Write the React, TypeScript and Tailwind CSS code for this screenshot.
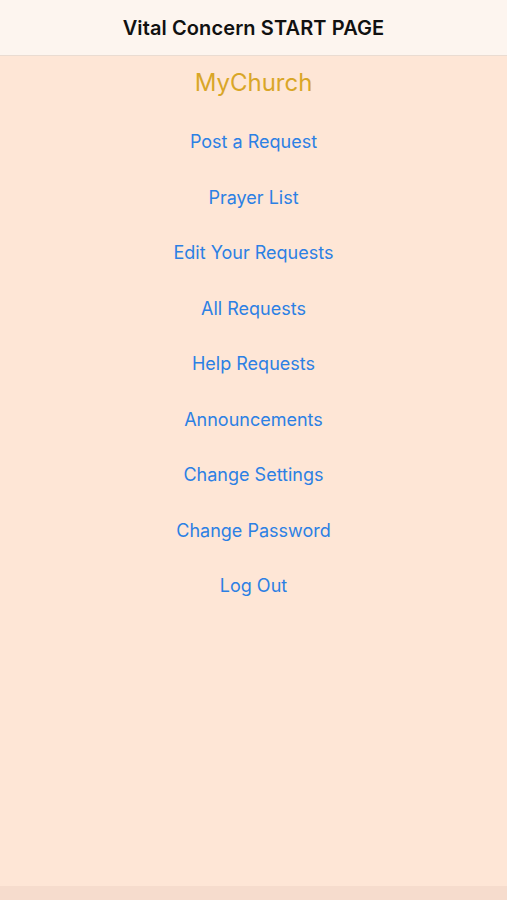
import React from "react";

const items = [
  "Post a Request",
  "Prayer List",
  "Edit Your Requests",
  "All Requests",
  "Help Requests",
  "Announcements",
  "Change Settings",
  "Change Password",
  "Log Out",
];

export default function App() {
  return (
    <div
      className="flex h-[900px] w-full flex-col bg-[#fee6d6]"
      style={{ fontFamily: "Inter, Roboto, 'Noto Sans', sans-serif" }}
    >
      {/* Nav bar */}
      <div className="flex h-[56px] shrink-0 items-center justify-center border-b border-[#eadcd2] bg-[#fdf5ef]">
        <h1 className="text-[20px] font-semibold tracking-[0.1px] text-[#111]">Vital Concern START PAGE</h1>
      </div>

      <div className="flex flex-1 flex-col items-center">
        <div className="mt-[11px] text-[24px] leading-[32px] text-[#d9a628]">MyChurch</div>
        <div className="mt-[15px] flex flex-col items-center">
          {items.map((item) => (
            <a key={item} href="#" className="flex h-[55.5px] items-center text-[18px] text-[#2c80e4]">
              {item}
            </a>
          ))}
        </div>
      </div>

      <div className="h-[14px] shrink-0 bg-[#f6dccd]" />
    </div>
  );
}
